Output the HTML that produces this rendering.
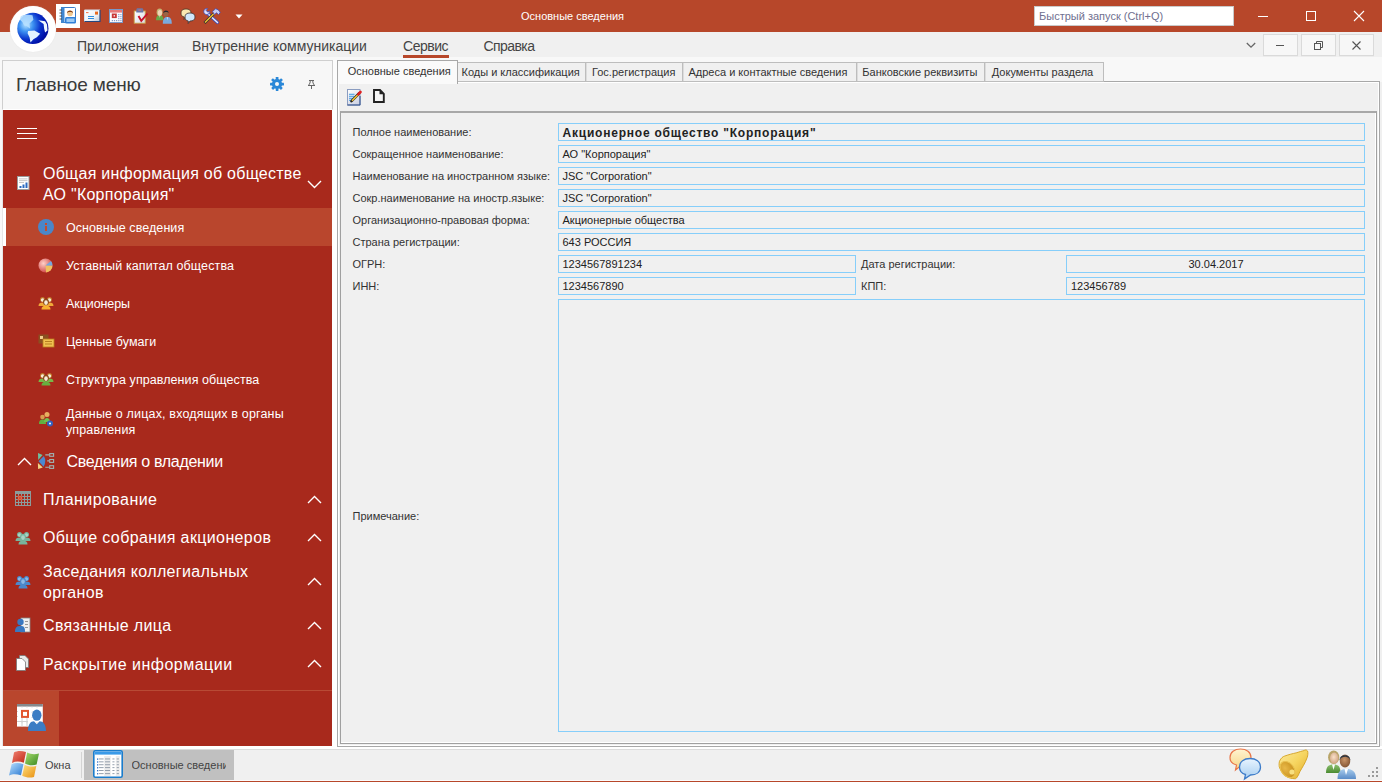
<!DOCTYPE html>
<html><head><meta charset="utf-8"><title>Основные сведения</title>
<style>
*{margin:0;padding:0;box-sizing:border-box}
html,body{width:1382px;height:782px;overflow:hidden;background:#f0f0f0;font-family:"Liberation Sans",sans-serif;position:relative}
.a{position:absolute;display:block}
.t{position:absolute;white-space:nowrap;line-height:1}
svg.a{overflow:visible}
</style></head><body>
<div class="a" style="left:0px;top:0px;width:1382px;height:32px;background:#b7472a"></div>
<div class="a" style="left:0px;top:32px;width:1382px;height:25px;background:#f0f0f0"></div>
<div class="a" style="left:0px;top:57px;width:1382px;height:25px;background:#f8f8f8"></div>
<div class="a" style="left:10px;top:6px;width:46px;height:46px;border-radius:50%;background:#fff;box-shadow:0 0 1px #ddd"></div>
<svg class="a" style="left:14px;top:10px" width="38" height="38" viewBox="0 0 38 38"><defs><radialGradient id="gl" cx="0.28" cy="0.38" r="0.8"><stop offset="0" stop-color="#b8e4ff"/><stop offset="0.28" stop-color="#3c92f2"/><stop offset="0.58" stop-color="#0a34cc"/><stop offset="0.85" stop-color="#0010a8"/><stop offset="1" stop-color="#000a88"/></radialGradient></defs>
<circle cx="18.85" cy="18.45" r="15.6" fill="url(#gl)"/>
<path d="M6.8 6.3 C10 4.5 15 4.6 18.5 5.3 L19.4 9.7 L15.5 13.6 L16 18.5 L12.6 16 L10.2 15.5 L8.3 12.1 L5.8 9.7Z" fill="#b8e0ff" opacity="0.85"/>
<path d="M14.1 20.9 L20.4 20.4 L26.2 23.8 L22.8 27.2 L19.4 29.2 L16.5 32.6 L15.5 27.2 L13.6 23.3Z" fill="#e4f4ff"/>
<path d="M24.3 10.2 L31.1 11.2 L33 14.6 L33.5 20.4 L31.1 22.4 L30.1 18.5 L29.6 14.1 L26.7 12.1Z" fill="#f0f8ff"/></svg>
<div class="a" style="left:56px;top:4px;width:24px;height:24px;background:#fff"></div>
<svg class="a" style="left:59px;top:7px" width="18" height="17" viewBox="0 0 18 17"><rect x="2.5" y="0.5" width="14" height="15" rx="1" fill="#fff" stroke="#3a7cc8"/>
<rect x="2" y="0" width="3.5" height="16" fill="#3f86d0"/>
<g fill="none" stroke="#444" stroke-width="0.9"><path d="M0.5 3 H3"/><path d="M0.5 6 H3"/><path d="M0.5 9 H3"/><path d="M0.5 12 H3"/></g>
<circle cx="11" cy="6.5" r="2.8" fill="#f0c890"/><path d="M8 6 C7.5 2.5 14.5 2.5 14 6 C13.5 4.5 8.5 4.5 8 6Z" fill="#8a4010"/>
<rect x="6" y="10" width="11" height="6.5" rx="1.5" fill="#2f7fd8"/><rect x="7.5" y="11.5" width="8" height="3.5" fill="#9ccaf4"/></svg>
<svg class="a" style="left:84px;top:9px" width="17" height="14" viewBox="0 0 17 14"><defs><linearGradient id="env" x1="0" y1="0" x2="1" y2="1"><stop offset="0" stop-color="#ffffff"/><stop offset="0.6" stop-color="#eef2f8"/><stop offset="1" stop-color="#b8c4d4"/></linearGradient></defs>
<rect x="0.5" y="1" width="15.5" height="11.8" fill="url(#env)"/>
<path d="M0.5 12.5 V1 H16" fill="none" stroke="#d4e0ee" stroke-width="1"/><path d="M0.5 12.5 H16 V1" fill="none" stroke="#24467e" stroke-width="1.2"/>
<rect x="11" y="2.6" width="3" height="3" fill="#e86a20"/><rect x="2" y="3.2" width="2.5" height="0.9" fill="#f06030"/>
<rect x="4" y="7" width="6" height="1" fill="#2e8ee0"/><rect x="4" y="9" width="6" height="1" fill="#2e8ee0"/></svg>
<svg class="a" style="left:109px;top:9px" width="14" height="14" viewBox="0 0 14 14"><rect x="0.5" y="0.5" width="13" height="13" fill="#fbfcff" stroke="#7a98c8" stroke-width="1"/>
<rect x="1" y="1" width="12" height="2.6" fill="#e87a7a"/>
<rect x="2.8" y="4.5" width="5" height="4.6" fill="#c83838"/><rect x="4.6" y="6.2" width="1.4" height="1.3" fill="#fff"/>
<g fill="#8a9cc8"><rect x="9.2" y="5" width="1.2" height="1.2"/><rect x="11.3" y="5" width="1.2" height="1.2"/><rect x="9.2" y="7" width="1.2" height="1.2"/><rect x="11.3" y="7" width="1.2" height="1.2"/><rect x="9.2" y="9" width="1.2" height="1.2"/><rect x="11.3" y="9" width="1.2" height="1.2"/>
<rect x="2.8" y="11" width="1.2" height="1.2"/><rect x="4.9" y="11" width="1.2" height="1.2"/><rect x="7" y="11" width="1.2" height="1.2"/><rect x="9.2" y="11" width="1.2" height="1.2"/><rect x="11.3" y="11" width="1.2" height="1.2"/></g></svg>
<svg class="a" style="left:133px;top:8px" width="16" height="16" viewBox="0 0 16 16"><defs><linearGradient id="clb" x1="0" y1="0" x2="1" y2="1"><stop offset="0" stop-color="#ffffff"/><stop offset="1" stop-color="#d8dce4"/></linearGradient></defs>
<rect x="1.2" y="3" width="11" height="12.2" fill="url(#clb)" stroke="#c8a44a" stroke-width="0.9"/>
<path d="M3.3 4.5 V2 C3.3 0.6 4 0.2 5 0.2 H8.5 C9.5 0.2 10.3 0.6 10.3 2 V4.5Z" fill="#6a78a8"/><rect x="5.3" y="1.6" width="3" height="0.9" fill="#e07070"/>
<path d="M5.5 8 L8.3 12.8 L14.5 5.5" fill="none" stroke="#c8102a" stroke-width="1.9"/></svg>
<svg class="a" style="left:155px;top:8px" width="18" height="16" viewBox="0 0 18 16"><path d="M1 12.2 C1 8.5 2.5 7 4.8 7 C7.1 7 8.5 8.5 8.5 12.2Z" fill="#68a848"/><path d="M4.3 7.2 L4.8 10 L5.3 7.2Z" fill="#e8f0e0"/>
<ellipse cx="4.6" cy="4.3" rx="3" ry="3.7" fill="#c4b474"/><ellipse cx="4.9" cy="4.9" rx="2.1" ry="2.8" fill="#f2d6b8"/>
<path d="M7.8 15.7 C7.8 11 9.5 9.1 12.3 9.1 C15.1 9.1 16.8 11 16.8 15.7Z" fill="#7aaade"/><path d="M11.8 9.3 L12.3 12.5 L12.8 9.3Z" fill="#f0f4fa"/>
<ellipse cx="10.9" cy="5.6" rx="2.6" ry="3.2" fill="#9a6444"/><path d="M8.3 5.2 C8 2 13.5 1.6 13.6 5 C12.8 3.6 9.5 3.4 8.3 5.2Z" fill="#2a2a30"/></svg>
<svg class="a" style="left:180px;top:8px" width="16" height="16" viewBox="0 0 16 16"><path d="M1 5 C1 2 3 1 6 1 C9 1 11 2 11 5 C11 8 9 9 6 9 L4 11.5 L4.3 9 C2 8.5 1 7.5 1 5Z" fill="#fae8b0" stroke="#4a3424" stroke-width="0.8"/>
<path d="M5 9 C5 6 7 5 10 5 C13 5 15 6 15 9 C15 12 13 13 10 13 L8.2 15.5 L8.3 13 C6 12.5 5 11.5 5 9Z" fill="#cfe8fb" stroke="#3a3030" stroke-width="0.8"/></svg>
<svg class="a" style="left:203px;top:8px" width="18" height="16" viewBox="0 0 18 16"><path d="M3 4 L14.5 14.5" stroke="#4a50b0" stroke-width="3.2" stroke-linecap="round"/><path d="M3 4 L14.5 14.5" stroke="#e8ecff" stroke-width="1.5" stroke-linecap="round"/>
<path d="M1.5 15 L10.5 6" stroke="#303030" stroke-width="2.8"/><path d="M2 14.5 L10.5 6" stroke="#f2c232" stroke-width="1.5"/>
<path d="M0.8 3.5 C0.8 1.5 2.5 0.3 4.5 0.6 L3.2 2.5 L4.8 4.2 L6.8 3 C7 5.2 5.5 6.6 3.5 6.5 C1.8 6.3 0.8 5.2 0.8 3.5Z" fill="#dfe3ff" stroke="#4a50b0" stroke-width="0.9"/>
<path d="M9.5 3.5 L12.5 0.8 C14.5 1 16.5 2.5 17.2 4.8 L15.5 6.5 L13.5 4.8 L11.5 6.5Z" fill="#c8cdf4" stroke="#4a50b0" stroke-width="0.9"/></svg>
<svg class="a" style="left:235px;top:14px" width="8" height="5" viewBox="0 0 8 5"><path d="M0.5 0.5 L7.5 0.5 L4 4.5Z" fill="#fff"/></svg>
<div class="t" style="left:521px;top:11.00px;font-size:11px;color:#fff;">Основные сведения</div>
<div class="a" style="left:1034px;top:6px;width:200px;height:20px;background:#fff;border:1px solid #c9c9c9"></div>
<div class="t" style="left:1039px;top:11.00px;font-size:11px;color:#707090;">Быстрый запуск (Ctrl+Q)</div>
<div class="a" style="left:1258px;top:16px;width:10px;height:1px;background:#fff"></div>
<div class="a" style="left:1306px;top:11px;width:10px;height:10px;border:1px solid #fff"></div>
<svg class="a" style="left:1353px;top:10px" width="12" height="12" viewBox="0 0 12 12"><path d="M1 1 L11 11 M11 1 L1 11" stroke="#fff" stroke-width="1.1"/></svg>
<div class="t" style="left:77px;top:39.00px;font-size:14px;color:#444;">Приложения</div>
<div class="t" style="left:192px;top:39.00px;font-size:14px;color:#444;">Внутренние коммуникации</div>
<div class="t" style="left:403px;top:39.00px;font-size:14px;color:#444;letter-spacing:-0.468px">Сервис</div>
<div class="a" style="left:403px;top:55px;width:46px;height:3px;background:#b7472a"></div>
<div class="t" style="left:483.5px;top:39.00px;font-size:14px;color:#444;letter-spacing:-0.572px">Справка</div>
<svg class="a" style="left:1246px;top:42px" width="10" height="7" viewBox="0 0 10 7"><path d="M0.8 1 L5 5.2 L9.2 1" fill="none" stroke="#666" stroke-width="1.3"/></svg>
<div class="a" style="left:1263px;top:34px;width:35px;height:22px;background:#f7f7f7;border:1px solid #dadada;box-shadow:0 1px 0 #ececec"></div>
<div class="a" style="left:1301px;top:34px;width:35px;height:22px;background:#f7f7f7;border:1px solid #dadada;box-shadow:0 1px 0 #ececec"></div>
<div class="a" style="left:1339px;top:34px;width:35px;height:22px;background:#f7f7f7;border:1px solid #dadada;box-shadow:0 1px 0 #ececec"></div>
<div class="a" style="left:1276px;top:45px;width:8px;height:1px;background:#555"></div>
<svg class="a" style="left:1314px;top:41px" width="9" height="9" viewBox="0 0 9 9"><rect x="0.5" y="2.5" width="6" height="6" fill="none" stroke="#555"/><path d="M2.5 2.5 V0.5 H8.5 V6.5 H6.5" fill="none" stroke="#555"/></svg>
<svg class="a" style="left:1352px;top:41px" width="9" height="9" viewBox="0 0 9 9"><path d="M0.5 0.5 L8.5 8.5 M8.5 0.5 L0.5 8.5" stroke="#555" stroke-width="1.1"/></svg>
<div class="a" style="left:2px;top:60px;width:331px;height:50px;background:#f7f7f7;border:1px solid #cfcfcf;border-bottom:1px solid #fff"></div>
<div class="a" style="left:332px;top:110px;width:5px;height:636px;background:#fff"></div>
<div class="a" style="left:333px;top:60px;width:4px;height:50px;background:#fcfcfc"></div>
<div class="a" style="left:2px;top:110px;width:1px;height:636px;background:#e6e6e6"></div>
<div class="a" style="left:0px;top:57px;width:2px;height:689px;background:#f8f8f8"></div>
<div class="a" style="left:3px;top:110px;width:329px;height:636px;background:#a8291c"></div>
<div class="t" style="left:16px;top:75.00px;font-size:19px;color:#3a3a3a;letter-spacing:-0.127px">Главное меню</div>
<svg class="a" style="left:269px;top:76px" width="16" height="16" viewBox="0 0 16 16"><g fill="#2b88d8" transform="translate(8 8)">
<circle r="5.1"/>
<rect x="-1.25" y="-7" width="2.7" height="14" rx="0.4"/>
<rect x="-1.25" y="-7" width="2.7" height="14" rx="0.4" transform="rotate(45)"/>
<rect x="-1.25" y="-7" width="2.7" height="14" rx="0.4" transform="rotate(90)"/>
<rect x="-1.25" y="-7" width="2.7" height="14" rx="0.4" transform="rotate(135)"/>
</g><circle cx="8" cy="8" r="2" fill="#f7f7f7"/></svg>
<svg class="a" style="left:307px;top:79px" width="10" height="11" viewBox="0 0 10 11"><path d="M2 1.5 H7 M3.3 1.5 L3 4 L1.5 6.5 M5.7 1.5 L6 4 L7.5 6.5 M1 6.5 H8 M4.5 6.5 V10" fill="none" stroke="#666" stroke-width="1"/></svg>
<div class="a" style="left:17px;top:128px;width:20px;height:1px;background:#fff"></div>
<div class="a" style="left:17px;top:133px;width:20px;height:1px;background:#fff"></div>
<div class="a" style="left:17px;top:138px;width:20px;height:1px;background:#fff"></div>
<svg class="a" style="left:17px;top:176px" width="13" height="14" viewBox="0 0 13 14"><rect x="0.5" y="0.5" width="11.5" height="13" fill="#fff" stroke="#9a9a9a"/>
<g fill="#b8b8b8"><rect x="2" y="2.5" width="8.5" height="0.8"/><rect x="2" y="4.3" width="8.5" height="0.8"/><rect x="2" y="6.1" width="5" height="0.8"/></g>
<g fill="#2a6ac0"><rect x="2.5" y="10" width="2" height="2"/><rect x="5.5" y="8.5" width="2" height="3.5"/><rect x="8.5" y="6.5" width="2" height="5.5"/></g></svg>
<div class="t" style="left:43px;top:166.00px;font-size:16px;color:#fff;letter-spacing:0.247px">Общая информация об обществе</div>
<div class="t" style="left:43px;top:187.00px;font-size:16px;color:#fff;letter-spacing:0.247px">АО "Корпорация"</div>
<svg class="a" style="left:307px;top:180px" width="15" height="9" viewBox="0 0 15 9"><path d="M1 1 L7.5 7.5 L14 1" fill="none" stroke="#fff" stroke-width="1.4"/></svg>
<div class="a" style="left:3px;top:208px;width:329px;height:38px;background:#b9462d"></div>
<div class="a" style="left:3px;top:208px;width:3px;height:38px;background:#fff"></div>
<svg class="a" style="left:38px;top:219px" width="16" height="16" viewBox="0 0 16 16"><circle cx="8" cy="8" r="8" fill="#4a86c8"/><rect x="7" y="7" width="2" height="5" fill="#c84a2a"/><rect x="7" y="4" width="2" height="2" fill="#c84a2a"/></svg>
<div class="t" style="left:66px;top:222.00px;font-size:12.5px;color:#fff;letter-spacing:0.066px">Основные сведения</div>
<div class="t" style="left:66px;top:260.00px;font-size:12.5px;color:#fff;letter-spacing:0.112px">Уставный капитал общества</div>
<div class="t" style="left:66px;top:298.00px;font-size:12.5px;color:#fff;letter-spacing:-0.076px">Акционеры</div>
<div class="t" style="left:66px;top:336.00px;font-size:12.5px;color:#fff;letter-spacing:0.057px">Ценные бумаги</div>
<div class="t" style="left:66px;top:374.00px;font-size:12.5px;color:#fff;letter-spacing:0.078px">Структура управления общества</div>
<div class="t" style="left:66px;top:408.00px;font-size:12.5px;color:#fff;letter-spacing:0.169px">Данные о лицах, входящих в органы</div>
<div class="t" style="left:66px;top:424.00px;font-size:12.5px;color:#fff;letter-spacing:0.121px">управления</div>
<svg class="a" style="left:38px;top:258px" width="16" height="15" viewBox="0 0 16 15"><defs><radialGradient id="pie" cx="0.35" cy="0.35" r="0.8"><stop offset="0" stop-color="#ffd0c8"/><stop offset="1" stop-color="#c83030"/></radialGradient></defs>
<circle cx="7.5" cy="7.5" r="7" fill="url(#pie)"/><path d="M7.5 7.5 L14.5 7.5 A7 7 0 0 1 8 14.5Z" fill="#f0c060"/><path d="M7.5 7.5 L13 3 A7 7 0 0 1 14.5 7.5Z" fill="#70a8e0"/></svg>
<svg class="a" style="left:38px;top:296px" width="16" height="14" viewBox="0 0 16 14"><path d="M0.5 10 C0.5 7.5 2 6.5 4.5 6.5 C7 6.5 8 7.5 8 10Z" fill="#f0a838"/><path d="M8 10 C8 7.5 9 6.5 11.5 6.5 C14 6.5 15.5 7.5 15.5 10Z" fill="#f0a838"/>
<circle cx="4.5" cy="3.6" r="2.5" fill="#c07828"/><circle cx="4.6" cy="4" r="1.8" fill="#f8ecd8"/>
<circle cx="11.5" cy="3.6" r="2.5" fill="#c07828"/><circle cx="11.4" cy="4" r="1.8" fill="#f8ecd8"/>
<path d="M3.5 13.5 C3.5 10.5 5.5 9.5 8 9.5 C10.5 9.5 12.5 10.5 12.5 13.5Z" fill="#f8b030"/>
<ellipse cx="8" cy="6" rx="2.9" ry="3.3" fill="#8a4a18"/><ellipse cx="8" cy="6.6" rx="1.8" ry="2.4" fill="#f8ecd8"/></svg>
<svg class="a" style="left:38px;top:334px" width="16" height="14" viewBox="0 0 16 14"><rect x="0.5" y="0.5" width="10" height="9" fill="#8a5020"/><rect x="2" y="2" width="3" height="3" fill="#f0d090"/>
<rect x="5" y="5" width="11" height="8" fill="#f0c050" stroke="#b88020" stroke-width="0.8"/><rect x="7" y="7" width="7" height="1" fill="#b88020"/><rect x="7" y="9.5" width="7" height="1" fill="#b88020"/></svg>
<svg class="a" style="left:38px;top:372px" width="16" height="14" viewBox="0 0 16 14"><path d="M0.5 10 C0.5 7.5 2 6.5 4.5 6.5 C7 6.5 8 7.5 8 10Z" fill="#78b848"/><path d="M8 10 C8 7.5 9 6.5 11.5 6.5 C14 6.5 15.5 7.5 15.5 10Z" fill="#78b848"/>
<circle cx="4.5" cy="3.6" r="2.5" fill="#c07828"/><circle cx="4.6" cy="4" r="1.8" fill="#f8ecd8"/>
<circle cx="11.5" cy="3.6" r="2.5" fill="#c07828"/><circle cx="11.4" cy="4" r="1.8" fill="#f8ecd8"/>
<path d="M3.5 13.5 C3.5 10.5 5.5 9.5 8 9.5 C10.5 9.5 12.5 10.5 12.5 13.5Z" fill="#68b040"/>
<ellipse cx="8" cy="6" rx="2.9" ry="3.3" fill="#8a4a18"/><ellipse cx="8" cy="6.6" rx="1.8" ry="2.4" fill="#f8ecd8"/></svg>
<svg class="a" style="left:38px;top:411px" width="16" height="16" viewBox="0 0 16 16"><circle cx="9" cy="3.5" r="2.5" fill="#e8b060"/><circle cx="4.5" cy="6" r="2.3" fill="#d8a050"/>
<path d="M1 13 C1 9.5 2.5 8.5 4.5 8.5 C6.5 8.5 8 9.5 8 13Z" fill="#60b040"/><path d="M6 11 C6 8 7.5 7 9 7 C10.5 7 12 8 12 11Z" fill="#70c050"/>
<circle cx="12" cy="12.5" r="3" fill="#3060c0"/><circle cx="12" cy="12.5" r="1" fill="#fff"/></svg>
<svg class="a" style="left:17px;top:457px" width="15" height="9" viewBox="0 0 15 9"><path d="M1 8 L7.5 1.5 L14 8" fill="none" stroke="#fff" stroke-width="1.4"/></svg>
<svg class="a" style="left:34px;top:450px" width="24" height="22" viewBox="0 0 24 22"><path d="M4 3 L8.6 5 L4.2 9.9Z" fill="#6cc0a0"/>
<path d="M4.5 11.3 L9.9 6 Q12.8 11.2 9.6 16.7Z" fill="#4a88d0"/>
<path d="M3.9 12.9 L8.8 17.5 L4.1 19Z" fill="#f2d384"/>
<g fill="none" stroke="#9fb2b2" stroke-width="1.1"><rect x="15.7" y="3.6" width="3.9" height="2.7"/><rect x="15.7" y="9.5" width="3.9" height="2.9"/><rect x="15.7" y="15.7" width="3.9" height="2.7"/>
<path d="M11.3 4.9 H15.2 M13.2 10.9 H15.2 M11.3 17.2 H15.2"/></g></svg>
<div class="t" style="left:66.5px;top:454.00px;font-size:16px;color:#fff;letter-spacing:-0.309px">Сведения о владении</div>
<svg class="a" style="left:15px;top:491px" width="16" height="15" viewBox="0 0 16 15"><rect x="0" y="0" width="16" height="15" fill="#8c9c9c"/><g fill="#a8291c"><rect x="1" y="3" width="2" height="2"/><rect x="1" y="6" width="2" height="2"/><rect x="1" y="9" width="2" height="2"/><rect x="1" y="12" width="2" height="2"/><rect x="4" y="3" width="2" height="2"/><rect x="4" y="6" width="2" height="2"/><rect x="4" y="9" width="2" height="2"/><rect x="4" y="12" width="2" height="2"/><rect x="7" y="3" width="2" height="2"/><rect x="7" y="6" width="2" height="2"/><rect x="7" y="9" width="2" height="2"/><rect x="7" y="12" width="2" height="2"/><rect x="10" y="3" width="2" height="2"/><rect x="10" y="6" width="2" height="2"/><rect x="10" y="9" width="2" height="2"/><rect x="10" y="12" width="2" height="2"/><rect x="13" y="3" width="2" height="2"/><rect x="13" y="6" width="2" height="2"/><rect x="13" y="9" width="2" height="2"/><rect x="13" y="12" width="2" height="2"/></g><rect x="3" y="5" width="4" height="4" fill="#f07858" stroke="#c83a20" stroke-width="0.5"/><rect x="4.3" y="6.3" width="1.4" height="1.4" fill="#a02818"/></svg>
<div class="t" style="left:43px;top:492.00px;font-size:16px;color:#fff;letter-spacing:0.437px">Планирование</div>
<svg class="a" style="left:307px;top:495px" width="15" height="9" viewBox="0 0 15 9"><path d="M1 8 L7.5 1.5 L14 8" fill="none" stroke="#fff" stroke-width="1.4"/></svg>
<svg class="a" style="left:15px;top:531px" width="16" height="13" viewBox="0 0 16 13"><path d="M0.5 10 C0.5 7.5 2 6.5 4.5 6.5 C7 6.5 8 7.5 8 10Z" fill="#78b49c"/><path d="M8 10 C8 7.5 9 6.5 11.5 6.5 C14 6.5 15.5 7.5 15.5 10Z" fill="#78b49c"/>
<circle cx="4.5" cy="3.6" r="2.5" fill="#78b49c"/><circle cx="4.6" cy="4" r="1.8" fill="#a8d4c4"/>
<circle cx="11.5" cy="3.6" r="2.5" fill="#78b49c"/><circle cx="11.4" cy="4" r="1.8" fill="#a8d4c4"/>
<path d="M3.5 13.5 C3.5 10.5 5.5 9.5 8 9.5 C10.5 9.5 12.5 10.5 12.5 13.5Z" fill="#78b49c"/>
<ellipse cx="8" cy="6" rx="2.9" ry="3.3" fill="#78b49c"/><ellipse cx="8" cy="6.6" rx="1.8" ry="2.4" fill="#a8d4c4"/></svg>
<div class="t" style="left:43px;top:530.00px;font-size:16px;color:#fff;letter-spacing:0.375px">Общие собрания акционеров</div>
<svg class="a" style="left:307px;top:533px" width="15" height="9" viewBox="0 0 15 9"><path d="M1 8 L7.5 1.5 L14 8" fill="none" stroke="#fff" stroke-width="1.4"/></svg>
<svg class="a" style="left:15px;top:575px" width="16" height="13" viewBox="0 0 16 13"><path d="M0.5 10 C0.5 7.5 2 6.5 4.5 6.5 C7 6.5 8 7.5 8 10Z" fill="#4a88cc"/><path d="M8 10 C8 7.5 9 6.5 11.5 6.5 C14 6.5 15.5 7.5 15.5 10Z" fill="#4a88cc"/>
<circle cx="4.5" cy="3.6" r="2.5" fill="#4a88cc"/><circle cx="4.6" cy="4" r="1.8" fill="#8ab8e4"/>
<circle cx="11.5" cy="3.6" r="2.5" fill="#4a88cc"/><circle cx="11.4" cy="4" r="1.8" fill="#8ab8e4"/>
<path d="M3.5 13.5 C3.5 10.5 5.5 9.5 8 9.5 C10.5 9.5 12.5 10.5 12.5 13.5Z" fill="#4a88cc"/>
<ellipse cx="8" cy="6" rx="2.9" ry="3.3" fill="#4a88cc"/><ellipse cx="8" cy="6.6" rx="1.8" ry="2.4" fill="#8ab8e4"/></svg>
<div class="t" style="left:43px;top:564.00px;font-size:16px;color:#fff;letter-spacing:0.354px">Заседания коллегиальных</div>
<div class="t" style="left:43px;top:585.00px;font-size:16px;color:#fff;letter-spacing:0.354px">органов</div>
<svg class="a" style="left:307px;top:577px" width="15" height="9" viewBox="0 0 15 9"><path d="M1 8 L7.5 1.5 L14 8" fill="none" stroke="#fff" stroke-width="1.4"/></svg>
<svg class="a" style="left:15px;top:617px" width="16" height="16" viewBox="0 0 16 16"><rect x="6" y="1" width="9" height="14" fill="#f0f0f0" stroke="#888" stroke-width="0.8"/><g fill="#999"><rect x="10" y="4" width="3" height="1"/><rect x="10" y="7" width="3" height="1"/><rect x="10" y="10" width="3" height="1"/></g>
<circle cx="5.5" cy="5" r="3.2" fill="#3a78c0"/><path d="M0 15 C0 10 2 9 5.5 9 C9 9 10 10 10 15Z" fill="#3a78c0"/></svg>
<div class="t" style="left:43px;top:618.00px;font-size:16px;color:#fff;letter-spacing:0.352px">Связанные лица</div>
<svg class="a" style="left:307px;top:621px" width="15" height="9" viewBox="0 0 15 9"><path d="M1 8 L7.5 1.5 L14 8" fill="none" stroke="#fff" stroke-width="1.4"/></svg>
<svg class="a" style="left:16px;top:655px" width="14" height="16" viewBox="0 0 14 16"><path d="M3.5 0.5 H9 L12.5 4 V12.5 H3.5Z" fill="#e8e8e8" stroke="#777" stroke-width="0.8"/>
<path d="M0.5 3.5 H6 L9.5 7 V15.5 H0.5Z" fill="#fff" stroke="#777" stroke-width="0.8"/></svg>
<div class="t" style="left:43px;top:657.00px;font-size:16px;color:#fff;letter-spacing:0.496px">Раскрытие информации</div>
<svg class="a" style="left:307px;top:659px" width="15" height="9" viewBox="0 0 15 9"><path d="M1 8 L7.5 1.5 L14 8" fill="none" stroke="#fff" stroke-width="1.4"/></svg>
<div class="a" style="left:3px;top:690px;width:329px;height:1px;background:#b84a35"></div>
<div class="a" style="left:3px;top:691px;width:56px;height:55px;background:#b9462d"></div>
<svg class="a" style="left:17px;top:703px" width="30" height="30" viewBox="0 0 30 30"><rect x="0" y="1" width="25.8" height="22.6" fill="#fff"/><rect x="0" y="1" width="25.8" height="2.6" fill="#858a8e"/>
<g stroke="#d4d4d4" stroke-width="1" stroke-dasharray="1 4.2"><path d="M0 8.5 H25.8 M0 13.5 H25.8 M5 3.6 V23.6 M10 3.6 V23.6 M15 3.6 V23.6 M20 3.6 V23.6"/></g>
<g stroke="#d0d0d0" stroke-width="1"><path d="M0 18.5 H11 M5 14 V23.6 M10 14 V23.6"/></g>
<rect x="5" y="7.9" width="6" height="6" fill="#fff" stroke="#e2552e" stroke-width="2"/>
<ellipse cx="19.8" cy="12.2" rx="4.7" ry="5.6" fill="#3b7dc4"/>
<path d="M11 28 C11 21.5 13.5 18.3 17 18.3 L19.8 21.2 L22.6 18.3 C26.2 18.3 29 21.5 29 28Z" fill="#3b7dc4"/></svg>
<div class="a" style="left:0px;top:746px;width:1382px;height:3px;background:#fff"></div>
<div class="a" style="left:337px;top:81px;width:1043px;height:666px;background:#f0f0f0;border:1px solid #a8a8a8"></div>
<div class="a" style="left:338px;top:82px;width:1041px;height:664px;border:1px solid #fff"></div>
<div class="a" style="left:457px;top:62px;width:129px;height:20px;background:#f0f0f0;border:1px solid #bdbdbd;border-left:none"></div>
<div class="t" style="left:461.5px;top:67.00px;font-size:11px;color:#333;">Коды и классификация</div>
<div class="a" style="left:586px;top:62px;width:97px;height:20px;background:#f0f0f0;border:1px solid #bdbdbd;border-left:none"></div>
<div class="a" style="left:586px;top:63px;width:1px;height:18px;background:#dcdcdc"></div>
<div class="t" style="left:592px;top:67.00px;font-size:11px;color:#333;">Гос.регистрация</div>
<div class="a" style="left:683px;top:62px;width:174px;height:20px;background:#f0f0f0;border:1px solid #bdbdbd;border-left:none"></div>
<div class="a" style="left:683px;top:63px;width:1px;height:18px;background:#dcdcdc"></div>
<div class="t" style="left:688.5px;top:67.00px;font-size:11px;color:#333;">Адреса и контактные сведения</div>
<div class="a" style="left:857px;top:62px;width:128px;height:20px;background:#f0f0f0;border:1px solid #bdbdbd;border-left:none"></div>
<div class="a" style="left:857px;top:63px;width:1px;height:18px;background:#dcdcdc"></div>
<div class="t" style="left:862.3px;top:67.00px;font-size:11px;color:#333;">Банковские реквизиты</div>
<div class="a" style="left:985px;top:62px;width:119px;height:20px;background:#f0f0f0;border:1px solid #bdbdbd;border-left:none"></div>
<div class="a" style="left:985px;top:63px;width:1px;height:18px;background:#dcdcdc"></div>
<div class="t" style="left:991.8px;top:67.00px;font-size:11px;color:#333;">Документы раздела</div>
<div class="a" style="left:337px;top:60px;width:121px;height:24px;background:#f9f9f9;border:1px solid #a8a8a8;border-bottom:none"></div>
<div class="a" style="left:338px;top:61px;width:119px;height:23px;background:#fafafa"></div>
<div class="t" style="left:347.7px;top:66.00px;font-size:11px;color:#333;">Основные сведения</div>
<svg class="a" style="left:346px;top:88px" width="17" height="18" viewBox="0 0 17 18"><defs><linearGradient id="dg" x1="0" y1="0" x2="0.6" y2="1"><stop offset="0" stop-color="#fff"/><stop offset="1" stop-color="#d0d4e4"/></linearGradient></defs>
<rect x="1.5" y="1.5" width="12.5" height="15.5" fill="url(#dg)" stroke="#8a9cc0" stroke-width="1"/><path d="M1.5 17 H14 V8" fill="none" stroke="#2a4a88" stroke-width="1"/>
<g fill="#2a90e0"><rect x="3" y="5.8" width="5.5" height="0.9"/><rect x="3" y="7.8" width="5" height="0.9"/><rect x="3" y="9.8" width="4" height="0.9"/><rect x="3" y="11.8" width="3" height="0.9"/></g>
<path d="M5.5 13.2 L13 5.5" stroke="#202020" stroke-width="2.6" stroke-linecap="round"/><path d="M6 12.8 L13 5.7" stroke="#f4c838" stroke-width="1.6"/>
<path d="M12.2 6.3 L14.5 4" stroke="#e02020" stroke-width="2.6" stroke-linecap="round"/></svg>
<svg class="a" style="left:372px;top:88px" width="13" height="16" viewBox="0 0 13 16"><path d="M2 2 H8 L11.8 5.8 V14 H2Z" fill="#f6f6f6" stroke="#222" stroke-width="1.9" stroke-linejoin="miter"/><path d="M7.5 1.5 V6.3 H12.3Z" fill="#222"/></svg>
<div class="a" style="left:340px;top:111px;width:1037px;height:633px;border:1px solid #a0a0a0;border-top:2px solid #a8a8a8"></div>
<div class="a" style="left:341px;top:113px;width:1035px;height:630px;border:1px solid #fff;border-top:none;border-left:none"></div>
<div class="t" style="left:352.5px;top:127.00px;font-size:11px;color:#333;">Полное наименование:</div>
<div class="a" style="left:558px;top:123px;width:807px;height:18px;border:1px solid #86cefa"></div>
<div class="t" style="left:562.5px;top:127.00px;font-size:11px;color:#222;"><b style="font-size:12px;letter-spacing:0.78px">Акционерное общество "Корпорация"</b></div>
<div class="t" style="left:352.5px;top:149.00px;font-size:11px;color:#333;">Сокращенное наименование:</div>
<div class="a" style="left:558px;top:145px;width:807px;height:18px;border:1px solid #86cefa"></div>
<div class="t" style="left:562.5px;top:149.00px;font-size:11px;color:#222;">АО "Корпорация"</div>
<div class="t" style="left:352.5px;top:171.00px;font-size:11px;color:#333;">Наименование на иностранном языке:</div>
<div class="a" style="left:558px;top:167px;width:807px;height:18px;border:1px solid #86cefa"></div>
<div class="t" style="left:562.5px;top:171.00px;font-size:11px;color:#222;">JSC "Corporation"</div>
<div class="t" style="left:352.5px;top:193.00px;font-size:11px;color:#333;">Сокр.наименование на иностр.языке:</div>
<div class="a" style="left:558px;top:189px;width:807px;height:18px;border:1px solid #86cefa"></div>
<div class="t" style="left:562.5px;top:193.00px;font-size:11px;color:#222;">JSC "Corporation"</div>
<div class="t" style="left:352.5px;top:215.00px;font-size:11px;color:#333;">Организационно-правовая форма:</div>
<div class="a" style="left:558px;top:211px;width:807px;height:18px;border:1px solid #86cefa"></div>
<div class="t" style="left:562.5px;top:215.00px;font-size:11px;color:#222;">Акционерные общества</div>
<div class="t" style="left:352.5px;top:237.00px;font-size:11px;color:#333;">Страна регистрации:</div>
<div class="a" style="left:558px;top:233px;width:807px;height:18px;border:1px solid #86cefa"></div>
<div class="t" style="left:562.5px;top:237.00px;font-size:11px;color:#222;">643 РОССИЯ</div>
<div class="t" style="left:352.5px;top:259.00px;font-size:11px;color:#333;">ОГРН:</div>
<div class="a" style="left:558px;top:255px;width:298px;height:18px;border:1px solid #86cefa"></div>
<div class="t" style="left:562.5px;top:259.00px;font-size:11px;color:#222;">1234567891234</div>
<div class="t" style="left:352.5px;top:281.00px;font-size:11px;color:#333;">ИНН:</div>
<div class="a" style="left:558px;top:277px;width:298px;height:18px;border:1px solid #86cefa"></div>
<div class="t" style="left:562.5px;top:281.00px;font-size:11px;color:#222;">1234567890</div>
<div class="t" style="left:861px;top:259.00px;font-size:11px;color:#333;">Дата регистрации:</div>
<div class="a" style="left:1066px;top:255px;width:299px;height:18px;border:1px solid #86cefa"></div>
<div class="t" style="left:1188.5px;top:259.00px;font-size:11px;color:#222;">30.04.2017</div>
<div class="t" style="left:861px;top:281.00px;font-size:11px;color:#333;">КПП:</div>
<div class="a" style="left:1066px;top:277px;width:299px;height:18px;border:1px solid #86cefa"></div>
<div class="t" style="left:1071px;top:281.00px;font-size:11px;color:#222;">123456789</div>
<div class="a" style="left:558px;top:299px;width:807px;height:433px;border:1px solid #86cefa"></div>
<div class="t" style="left:352.5px;top:511.00px;font-size:11px;color:#333;">Примечание:</div>
<div class="a" style="left:0px;top:749px;width:1382px;height:1px;background:#dcdcdc"></div>
<div class="a" style="left:0px;top:780px;width:1382px;height:1px;background:#fbfbfb"></div>
<div class="a" style="left:0px;top:781px;width:1382px;height:1px;background:#b7472a"></div>
<svg class="a" style="left:0px;top:745px" width="45" height="37" viewBox="0 0 45 37"><defs><linearGradient id="wr" x1="0" y1="0" x2="1" y2="1"><stop offset="0" stop-color="#f08070"/><stop offset="1" stop-color="#c02818"/></linearGradient>
<linearGradient id="wg" x1="0" y1="0" x2="1" y2="1"><stop offset="0" stop-color="#a8dc70"/><stop offset="1" stop-color="#3a8a20"/></linearGradient>
<linearGradient id="wb" x1="0" y1="0" x2="1" y2="1"><stop offset="0" stop-color="#b8e0ff"/><stop offset="1" stop-color="#2a78d0"/></linearGradient>
<linearGradient id="wy" x1="0" y1="0" x2="1" y2="1"><stop offset="0" stop-color="#ffe080"/><stop offset="1" stop-color="#e89010"/></linearGradient></defs>
<path d="M14 7.5 C17 5.5 21.5 5.5 26 7 L23.8 17.8 C19.5 16.2 15.5 16.2 12 18Z" fill="url(#wr)"/>
<path d="M27.2 7.6 C31 9.5 35 9.6 39 8.5 L36.6 19.5 C32.5 20.6 28.5 20.3 25 18.4Z" fill="url(#wg)"/>
<path d="M11.6 19.3 C15 17.6 19 17.6 23.4 19.2 L21 30.3 C16.5 28.7 12.5 28.7 9 30.6Z" fill="url(#wb)"/>
<path d="M24.6 19.8 C28 21.7 32 22 36.3 20.9 L34 32 C30 33 26 32.7 22.2 30.8Z" fill="url(#wy)"/></svg>
<div class="t" style="left:45px;top:760.00px;font-size:11px;color:#444;">Окна</div>
<div class="a" style="left:81px;top:752px;width:1px;height:26px;background:#d4d4d4"></div>
<div class="a" style="left:84px;top:750px;width:150px;height:30px;background:#c0c0c0"></div>
<svg class="a" style="left:93px;top:750px" width="30" height="28" viewBox="0 0 30 28"><rect x="0.8" y="0.8" width="28.4" height="26.4" rx="1.5" fill="#fff" stroke="#1a7ccc" stroke-width="1.6"/><rect x="1.6" y="1.6" width="26.8" height="3" fill="#3a9ae8"/><g fill="#ececec"><rect x="11.2" y="6" width="6.6" height="20"/><rect x="22.8" y="6" width="4" height="20"/></g><g fill="#1a5ec0"><rect x="4" y="8.5" width="1.2" height="1.2"/><rect x="4" y="11.4" width="1.2" height="1.2"/><rect x="4" y="14.3" width="1.2" height="1.2"/><rect x="4" y="17.2" width="1.2" height="1.2"/><rect x="4" y="20.1" width="1.2" height="1.2"/><rect x="4" y="23.2" width="1.2" height="1.2"/></g><g fill="#8a96a4"><rect x="5.8" y="8.5" width="4.8" height="0.9"/><rect x="12" y="8.5" width="5" height="0.9"/><rect x="19.4" y="8.5" width="2.1" height="0.9"/><rect x="23.7" y="8.5" width="2.2" height="0.9"/><rect x="5.8" y="11.4" width="4.8" height="0.9"/><rect x="12" y="11.4" width="5" height="0.9"/><rect x="19.4" y="11.4" width="2.1" height="0.9"/><rect x="23.7" y="11.4" width="2.2" height="0.9"/><rect x="5.8" y="14.3" width="4.8" height="0.9"/><rect x="12" y="14.3" width="5" height="0.9"/><rect x="19.4" y="14.3" width="2.1" height="0.9"/><rect x="23.7" y="14.3" width="2.2" height="0.9"/><rect x="5.8" y="17.2" width="4.8" height="0.9"/><rect x="12" y="17.2" width="5" height="0.9"/><rect x="19.4" y="17.2" width="2.1" height="0.9"/><rect x="23.7" y="17.2" width="2.2" height="0.9"/><rect x="5.8" y="20.1" width="4.8" height="0.9"/><rect x="12" y="20.1" width="5" height="0.9"/><rect x="19.4" y="20.1" width="2.1" height="0.9"/><rect x="23.7" y="20.1" width="2.2" height="0.9"/><rect x="5.8" y="23.2" width="4.8" height="0.9"/><rect x="12" y="23.2" width="5" height="0.9"/><rect x="19.4" y="23.2" width="2.1" height="0.9"/><rect x="23.7" y="23.2" width="2.2" height="0.9"/></g></svg>
<div class="t" style="left:131.5px;top:759.69px;font-size:11px;color:#444;width:94px;overflow:hidden">Основные сведения</div>
<svg class="a" style="left:1228px;top:748px" width="34" height="32" viewBox="0 0 34 32"><defs><linearGradient id="cy" x1="0" y1="0" x2="0" y2="1"><stop offset="0" stop-color="#fff4d0"/><stop offset="1" stop-color="#f6d488"/></linearGradient>
<linearGradient id="cb" x1="0" y1="0" x2="0" y2="1"><stop offset="0" stop-color="#e8f4ff"/><stop offset="1" stop-color="#a6cdf0"/></linearGradient></defs>
<path d="M12.5 1 C18.5 1 23 4 23 9.5 C23 15 18.5 17.5 13 17.5 L7.5 22 L8.5 17 C4.5 16 2 13.5 2 9.5 C2 4 6.5 1 12.5 1Z" fill="url(#cy)" stroke="#e8764a" stroke-width="1.2"/>
<path d="M22 10.5 C28 10.5 32.5 13.5 32.5 19 C32.5 24.5 28 27 22.5 27 L16.5 31 L17.5 26.5 C13.5 25.5 11.5 23 11.5 19 C11.5 13.5 16 10.5 22 10.5Z" fill="url(#cb)" stroke="#3d7cc9" stroke-width="1.3"/></svg>
<svg class="a" style="left:1274px;top:746px" width="38" height="36" viewBox="0 0 38 36"><defs><linearGradient id="bell" x1="0" y1="0" x2="1" y2="1"><stop offset="0" stop-color="#fbeaa0"/><stop offset="0.5" stop-color="#f6d560"/><stop offset="1" stop-color="#e0aa28"/></linearGradient>
<radialGradient id="bm" cx="0.4" cy="0.35" r="0.7"><stop offset="0" stop-color="#e8b848"/><stop offset="1" stop-color="#c8901c"/></radialGradient></defs>
<path d="M5.5 15.2 C7 12 9 10.5 10.6 10.1 C15 8.5 19 7.5 22.1 6.9 C25 6 28 5 30 4.6 C31 3.8 32.5 3.6 33.6 5 C34.2 7 33.8 9.5 33.2 11.5 C32 14.5 31 17 29.5 19.4 C28 22 26.8 24 25.8 25.8 C25 28 24 30 23 31.3 C22.3 32.5 21.5 32.9 20.3 32.7 C17.5 32.5 15.5 32 13.8 31.3 C11 30 9 28 7.8 25.8 C6 23 5 21 5.1 19.4 C5 17.8 5.1 16.5 5.5 15.2Z" fill="url(#bell)" stroke="#d4a020" stroke-width="0.9"/>
<ellipse cx="13.6" cy="23.5" rx="6.3" ry="9" transform="rotate(-38 13.6 23.5)" fill="url(#bm)" stroke="#e8c050" stroke-width="1"/>
<circle cx="18" cy="26" r="2.6" fill="#f8e080"/></svg>
<svg class="a" style="left:1325px;top:749px" width="34" height="31" viewBox="0 0 34 31"><defs><radialGradient id="fw" cx="0.45" cy="0.4" r="0.7"><stop offset="0" stop-color="#fae0c8"/><stop offset="1" stop-color="#c89a78"/></radialGradient>
<radialGradient id="fm" cx="0.45" cy="0.4" r="0.7"><stop offset="0" stop-color="#c89468"/><stop offset="1" stop-color="#7a4c2c"/></radialGradient>
<linearGradient id="bg1" x1="0" y1="0" x2="0" y2="1"><stop offset="0" stop-color="#8cc070"/><stop offset="1" stop-color="#4a8a30"/></linearGradient>
<linearGradient id="bb1" x1="0" y1="0" x2="0" y2="1"><stop offset="0" stop-color="#a8ccec"/><stop offset="1" stop-color="#5a8cc8"/></linearGradient></defs>
<path d="M1 24 C1 17.5 3.5 15.5 8.5 15.5 C13.5 15.5 15.5 17.5 15.5 24Z" fill="url(#bg1)"/><path d="M7 15.5 L8.5 21 L10 15.5Z" fill="#fff"/>
<ellipse cx="8.7" cy="8.3" rx="5.6" ry="6.8" fill="#b8a468"/>
<ellipse cx="9.2" cy="9.2" rx="4.2" ry="5.6" fill="url(#fw)"/>
<path d="M12.5 30 C12.5 22.5 15.5 20 21.5 20 C27.5 20 31 22.5 31 30Z" fill="url(#bb1)"/><path d="M19.5 20 L21 26 L23 20Z" fill="#fff"/>
<ellipse cx="20" cy="12" rx="5.2" ry="6.5" fill="url(#fm)"/><path d="M14.6 11.5 C14 4.5 25.8 4.5 25.3 11.5 C24.5 8.5 22 7.8 20 7.8 C18 7.8 15.5 8.5 14.6 11.5Z" fill="#2a3440"/></svg>
<svg class="a" style="left:1368px;top:767px" width="10" height="10" viewBox="0 0 10 10"><g fill="#9a9a9a"><rect x="8" y="0" width="2" height="2"/><rect x="4" y="4" width="2" height="2"/><rect x="8" y="4" width="2" height="2"/><rect x="0" y="8" width="2" height="2"/><rect x="4" y="8" width="2" height="2"/><rect x="8" y="8" width="2" height="2"/></g></svg>
</body></html>
